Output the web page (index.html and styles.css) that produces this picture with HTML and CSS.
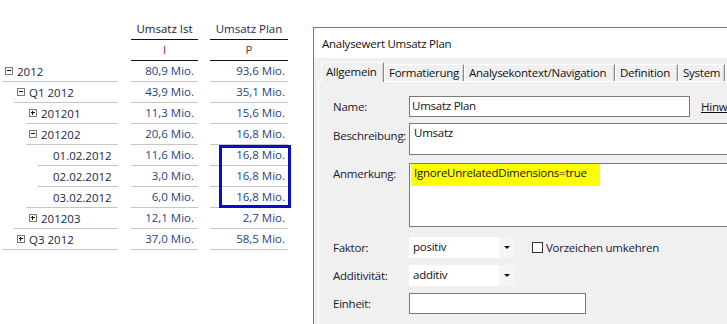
FILE: index.html
```html
<!DOCTYPE html>
<html lang="de">
<head>
    <meta charset="UTF-8">
    <title>Analysewert Umsatz Plan</title>
    <link rel="stylesheet" href="styles.css">
</head>
<body>
    <div class="page">
        <!-- Pivot table -->
        <div class="pivot">
            <div class="prow">
                <div class="plabel-empty"></div>
                <div class="phead ist">Umsatz Ist</div>
                <div class="phead plan plan-title">Umsatz Plan</div>
            </div>
            <div class="prow">
                <div class="plabel-empty"></div>
                <div class="phead ist code">I</div>
                <div class="phead plan code">P</div>
            </div>

            <div class="prow">
                <div class="plabel"><div class="lab ln0 lv0"><span class="tg minus"></span>2012</div></div>
                <div class="pval ist">80,9 Mio.</div>
                <div class="pval plan">93,6 Mio.</div>
            </div>
            <div class="prow">
                <div class="plabel"><div class="lab ln1 lv1"><span class="tg minus"></span>Q1 2012</div></div>
                <div class="pval ist">43,9 Mio.</div>
                <div class="pval plan">35,1 Mio.</div>
            </div>
            <div class="prow">
                <div class="plabel"><div class="lab ln2 lv2"><span class="tg plus"></span>201201</div></div>
                <div class="pval ist">11,3 Mio.</div>
                <div class="pval plan">15,6 Mio.</div>
            </div>
            <div class="prow">
                <div class="plabel"><div class="lab ln2 lv2"><span class="tg minus"></span>201202</div></div>
                <div class="pval ist">20,6 Mio.</div>
                <div class="pval plan">16,8 Mio.</div>
            </div>
            <div class="prow">
                <div class="plabel"><div class="lab ln3 lv3"><span class="tg leaf"></span>01.02.2012</div></div>
                <div class="pval ist">11,6 Mio.</div>
                <div class="pval plan">16,8 Mio.</div>
            </div>
            <div class="prow">
                <div class="plabel"><div class="lab ln3 lv3"><span class="tg leaf"></span>02.02.2012</div></div>
                <div class="pval ist">3,0 Mio.</div>
                <div class="pval plan">16,8 Mio.</div>
            </div>
            <div class="prow">
                <div class="plabel"><div class="lab ln2 lv3"><span class="tg leaf"></span>03.02.2012</div></div>
                <div class="pval ist">6,0 Mio.</div>
                <div class="pval plan">16,8 Mio.</div>
            </div>
            <div class="prow">
                <div class="plabel"><div class="lab ln1 lv2"><span class="tg plus"></span>201203</div></div>
                <div class="pval ist">12,1 Mio.</div>
                <div class="pval plan">2,7 Mio.</div>
            </div>
            <div class="prow">
                <div class="plabel"><div class="lab ln0 lv1"><span class="tg plus"></span>Q3 2012</div></div>
                <div class="pval ist">37,0 Mio.</div>
                <div class="pval plan">58,5 Mio.</div>
            </div>

            <!-- highlighted cells -->
            <div class="mark"></div>
        </div>

        <!-- Property dialog -->
        <div class="dialog">
            <div class="titlebar">Analysewert Umsatz Plan</div>
            <div class="tabs">
                <div class="tab selected t-allg">Allgemein</div>
                <div class="tab t-form">Formatierung</div>
                <div class="tab t-ctx">Analysekontext/Navigation</div>
                <div class="tab t-def">Definition</div>
                <div class="tab t-sys">System</div>
                <div class="tab t-more"></div>
            </div>
            <div class="panel">
                <div class="frow r-name">
                    <div class="flabel">Name:</div>
                    <div class="field name-field">Umsatz Plan</div>
                    <a class="hint">Hinweis</a>
                </div>
                <div class="frow r-desc">
                    <div class="flabel desc-label">Beschreibung:</div>
                    <div class="field area desc-field">Umsatz</div>
                </div>
                <div class="frow r-note">
                    <div class="flabel">Anmerkung:</div>
                    <div class="field area note-field"><span class="yellow">IgnoreUnrelatedDimensions=true</span></div>
                </div>
                <div class="frow r-factor">
                    <div class="flabel">Faktor:</div>
                    <div class="combo"><span class="combo-text">positiv</span><span class="combo-btn"><span class="arrow"></span></span></div>
                    <label class="check"><span class="box"></span>Vorzeichen umkehren</label>
                </div>
                <div class="frow r-add">
                    <div class="flabel">Additivität:</div>
                    <div class="combo"><span class="combo-text">additiv</span><span class="combo-btn"><span class="arrow"></span></span></div>
                </div>
                <div class="frow r-unit">
                    <div class="flabel">Einheit:</div>
                    <div class="field unit-field"></div>
                </div>
            </div>
        </div>
    </div>
</body>
</html>
```

FILE: styles.css
```css
body {
    margin: 0;
    font-family: "Open Sans", "Noto Sans", sans-serif;
    font-size: 11.5px;
    color: #1a1a1a;
    background: #fff;
}
.page {
    display: flex;
    width: 727px;
    height: 324px;
    overflow: hidden;
}

/* pivot table */
.pivot {
    position: relative;
    width: 313px;
    flex: none;
    padding-top: 19px;
}
.prow {
    display: flex;
    height: 21px;
}
.plabel-empty,
.plabel {
    width: 118px;
    flex: none;
}
.lab {
    --ln: 2px;
    --lv: 5px;
    display: flex;
    align-items: center;
    height: 20px;
    margin-left: var(--ln);
    padding-left: calc(var(--lv) - var(--ln));
    border-bottom: 1px solid #c6c6c6;
    color: #1d2440;
    white-space: nowrap;
}
.ln0 { --ln: 2px; }
.ln1 { --ln: 14px; }
.ln2 { --ln: 26px; }
.ln3 { --ln: 38px; }
.lv0 { --lv: 5px; }
.lv1 { --lv: 17px; }
.lv2 { --lv: 29px; }
.lv3 { --lv: 41px; }
.tg {
    position: relative;
    flex: none;
    box-sizing: border-box;
    width: 8px;
    height: 8px;
    margin-right: 4px;
    border: 1px solid #7a7a7a;
}
.tg.leaf {
    border-color: transparent;
}
.tg.minus::before,
.tg.plus::before {
    content: "";
    position: absolute;
    left: 1px;
    top: 2px;
    width: 4px;
    height: 1px;
    background: #111;
}
.tg.plus::after {
    content: "";
    position: absolute;
    left: 2px;
    top: 1px;
    width: 1px;
    height: 4px;
    background: #111;
}
.phead,
.pval {
    flex: none;
    box-sizing: border-box;
    height: 21px;
    line-height: 20px;
    white-space: nowrap;
}
.ist {
    width: 67px;
    margin-left: 13px;
}
.plan {
    width: 78px;
    margin-left: 12px;
}
.phead {
    text-align: center;
    border-bottom: 1px solid #111;
}
.plan-title {
    color: #2a1f4a;
}
.code {
    color: #8a2a1c;
}
.pval {
    text-align: right;
    border-bottom: 1px solid #c6c6c6;
    color: #2a3f7e;
}
.pval.ist {
    padding-right: 4px;
}
.pval.plan {
    padding-right: 3px;
}
.mark {
    position: absolute;
    left: 219px;
    top: 145px;
    width: 72px;
    height: 63px;
    box-sizing: border-box;
    border: 3px solid #0a0fc4;
}

/* dialog */
.dialog {
    flex: none;
    width: 420px;
    margin-top: 27px;
    border-top: 1px solid #3a85d6;
    border-left: 1px solid #3a85d6;
    background: #f0f0f0;
    color: #111;
    letter-spacing: -0.25px;
}
.titlebar {
    height: 30px;
    line-height: 31px;
    padding-left: 8px;
    background: #fff;
}
.tabs {
    display: flex;
    align-items: flex-end;
    height: 19px;
    margin-left: 4px;
    padding: 4px 0 0 3px;
    white-space: nowrap;
}
.tab {
    flex: none;
    box-sizing: border-box;
    height: 17px;
    line-height: 15px;
    padding-left: 4px;
    border-top: 1px solid #fff;
    border-left: 1px solid #fff;
    border-right: 1px solid #8a8a8a;
    box-shadow: inset -1px 0 #d4d4d4;
    overflow: hidden;
}
.tab.selected {
    height: 20px;
    line-height: 17px;
    margin-bottom: -1px;
    position: relative;
    background: #f0f0f0;
}
.t-allg { width: 63px; }
.t-form { width: 80px; }
.t-ctx { width: 151px; }
.t-def { width: 63px; }
.t-sys { width: 47px; }
.t-more { width: 20px; }
.panel {
    margin-left: 4px;
    height: 240px;
    padding: 14px 0 0 14px;
    border-top: 1px solid #fff;
    border-left: 1px solid #fff;
}
.frow {
    display: flex;
    align-items: flex-start;
    white-space: nowrap;
}
.flabel {
    width: 76px;
    flex: none;
    line-height: 21px;
    color: #1c1830;
}
.desc-label {
    padding-top: 2px;
}
.field {
    box-sizing: border-box;
    flex: none;
    height: 21px;
    border: 1px solid #7a7a7a;
    background: #fff;
    line-height: 17px;
    padding: 0 2px;
}
.name-field {
    width: 281px;
}
.hint {
    margin-left: 11px;
    line-height: 21px;
    color: #111;
    text-decoration: underline;
}
.area {
    width: 340px;
}
.desc-field {
    height: 32px;
    line-height: 16px;
    padding: 1px 4px;
}
.note-field {
    height: 64px;
    padding: 0 1px;
    line-height: 16px;
}
.yellow {
    display: inline-block;
    width: 186px;
    padding: 1px 0 5px 3px;
    background: #ffff00;
}
.unit-field {
    width: 177px;
}
.r-name { margin-bottom: 6px; }
.r-desc { margin-bottom: 8px; }
.r-note { margin-bottom: 10px; }
.r-factor { margin-bottom: 7px; }
.r-add { margin-bottom: 7px; }
.combo {
    display: flex;
    flex: none;
    width: 106px;
    height: 21px;
    background: #fff;
}
.combo-text {
    flex: 1;
    padding-left: 4px;
    line-height: 20px;
}
.combo-btn {
    display: flex;
    align-items: center;
    justify-content: center;
    width: 16px;
    background: #f5f5f5;
}
.arrow {
    width: 0;
    height: 0;
    border-left: 3px solid transparent;
    border-right: 3px solid transparent;
    border-top: 3px solid #111;
    margin-bottom: 1px;
}
.check {
    display: flex;
    align-items: center;
    height: 21px;
    margin-left: 17px;
    color: #1c1830;
}
.check .box {
    box-sizing: border-box;
    width: 11px;
    height: 11px;
    margin-right: 3px;
    border: 1px solid #333;
    background: #fff;
}
```
